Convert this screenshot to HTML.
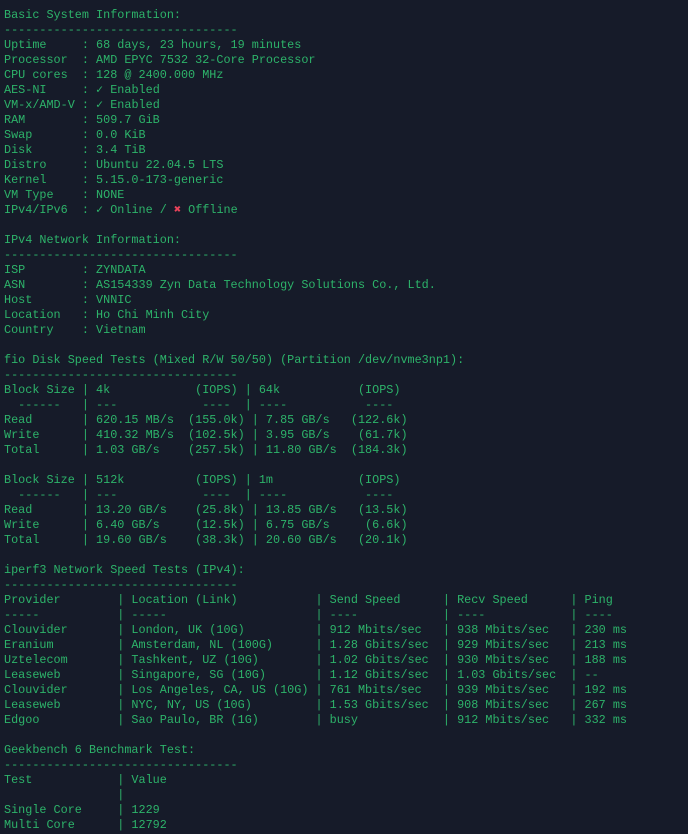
<!DOCTYPE html>
<html><head><meta charset="utf-8"><style>
html,body{margin:0;padding:0;background:#161b29;width:688px;height:834px;overflow:hidden}
pre{margin:0;padding:8px 0 0 4px;font-family:"Liberation Mono","DejaVu Sans Mono",monospace;font-size:11.8px;line-height:15px;color:#2db36a;white-space:pre}
.x{color:#e8425a;font-weight:bold}
</style></head><body><pre>Basic System Information:
---------------------------------
Uptime     : 68 days, 23 hours, 19 minutes
Processor  : AMD EPYC 7532 32-Core Processor
CPU cores  : 128 @ 2400.000 MHz
AES-NI     : ✓ Enabled
VM-x/AMD-V : ✓ Enabled
RAM        : 509.7 GiB
Swap       : 0.0 KiB
Disk       : 3.4 TiB
Distro     : Ubuntu 22.04.5 LTS
Kernel     : 5.15.0-173-generic
VM Type    : NONE
IPv4/IPv6  : ✓ Online / <span class="x">✖</span> Offline

IPv4 Network Information:
---------------------------------
ISP        : ZYNDATA
ASN        : AS154339 Zyn Data Technology Solutions Co., Ltd.
Host       : VNNIC
Location   : Ho Chi Minh City
Country    : Vietnam

fio Disk Speed Tests (Mixed R/W 50/50) (Partition /dev/nvme3np1):
---------------------------------
Block Size | 4k            (IOPS) | 64k           (IOPS)
  ------   | ---            ----  | ----           ---- 
Read       | 620.15 MB/s  (155.0k) | 7.85 GB/s   (122.6k)
Write      | 410.32 MB/s  (102.5k) | 3.95 GB/s    (61.7k)
Total      | 1.03 GB/s    (257.5k) | 11.80 GB/s  (184.3k)

Block Size | 512k          (IOPS) | 1m            (IOPS)
  ------   | ---            ----  | ----           ---- 
Read       | 13.20 GB/s    (25.8k) | 13.85 GB/s   (13.5k)
Write      | 6.40 GB/s     (12.5k) | 6.75 GB/s     (6.6k)
Total      | 19.60 GB/s    (38.3k) | 20.60 GB/s   (20.1k)

iperf3 Network Speed Tests (IPv4):
---------------------------------
Provider        | Location (Link)           | Send Speed      | Recv Speed      | Ping
-----           | -----                     | ----            | ----            | ----
Clouvider       | London, UK (10G)          | 912 Mbits/sec   | 938 Mbits/sec   | 230 ms
Eranium         | Amsterdam, NL (100G)      | 1.28 Gbits/sec  | 929 Mbits/sec   | 213 ms
Uztelecom       | Tashkent, UZ (10G)        | 1.02 Gbits/sec  | 930 Mbits/sec   | 188 ms
Leaseweb        | Singapore, SG (10G)       | 1.12 Gbits/sec  | 1.03 Gbits/sec  | --
Clouvider       | Los Angeles, CA, US (10G) | 761 Mbits/sec   | 939 Mbits/sec   | 192 ms
Leaseweb        | NYC, NY, US (10G)         | 1.53 Gbits/sec  | 908 Mbits/sec   | 267 ms
Edgoo           | Sao Paulo, BR (1G)        | busy            | 912 Mbits/sec   | 332 ms

Geekbench 6 Benchmark Test:
---------------------------------
Test            | Value
                |
Single Core     | 1229
Multi Core      | 12792
</pre></body></html>
